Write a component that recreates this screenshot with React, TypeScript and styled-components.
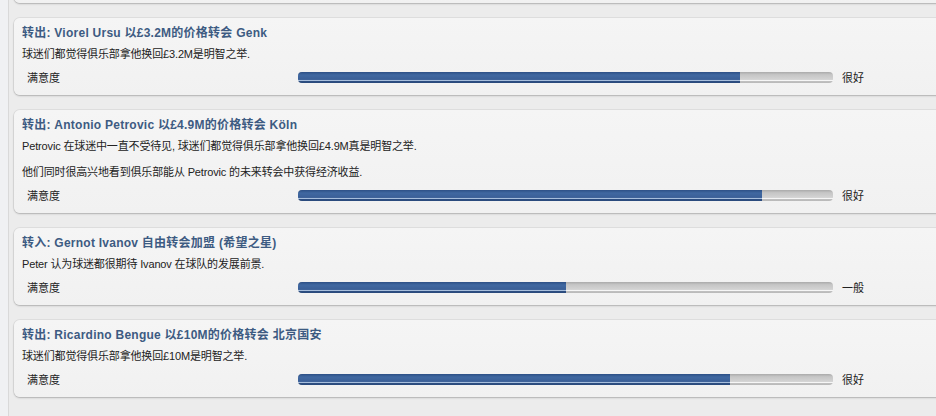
import React from 'react';
import styled, { createGlobalStyle } from 'styled-components';

const GlobalStyle = createGlobalStyle`
  html, body {
    margin: 0;
    padding: 0;
    background: #ececec;
    overflow: hidden;
  }
  body {
    font-family: "Liberation Sans", "Noto Sans CJK SC", sans-serif;
    color: #222;
  }
`;

const Page = styled.div`
  display: flex;
  width: 936px;
  height: 416px;
  overflow: hidden;
`;

const SideStrip = styled.div`
  width: 8px;
  flex-shrink: 0;
  background: #f0f1f3;
  border-right: 1px solid #d9d9d9;
`;

const List = styled.div`
  display: flex;
  flex-direction: column;
  gap: 15px;
  padding-left: 5px;
  width: 960px;
  flex-shrink: 0;
`;

const Card = styled.div<{ $offset?: number }>`
  background: linear-gradient(to bottom, #f5f5f5, #f1f1f1);
  border-radius: 6px;
  box-shadow: 0 1px 2px rgba(0, 0, 0, 0.22), 0 0 0 1px rgba(0, 0, 0, 0.05);
  padding: 7px 8px 10px 8px;
  margin-top: ${(p) => (p.$offset ? `${p.$offset}px` : '0')};
`;

const CardSpacer = styled.div`
  height: 60px;
`;

const Title = styled.div`
  font-weight: bold;
  font-size: 12px;
  line-height: 16px;
  letter-spacing: 0.25px;
  color: #3d5b82;
  white-space: nowrap;
`;

const Text = styled.p`
  margin: 5px 0 0;
  font-size: 11px;
  line-height: 16px;
  letter-spacing: -0.15px;
  white-space: nowrap;

  & + & {
    margin-top: 10px;
  }
`;

const Row = styled.div`
  display: grid;
  grid-template-columns: 271px 535px auto;
  align-items: center;
  margin-top: 7px;
  padding-left: 5px;
  height: 16px;
  font-size: 11px;
`;

const Track = styled.div`
  height: 11px;
  border-radius: 4px;
  overflow: hidden;
  background: linear-gradient(
    to bottom,
    #aaaaaa 0%,
    #c6c6c6 25%,
    #d3d3d3 68%,
    #f6f6f6 72%,
    #f6f6f6 82%,
    #bfbfbf 86%,
    #b8b8b8 100%
  );
`;

const Fill = styled.div`
  height: 100%;
  background: linear-gradient(
    to bottom,
    #2d5086 0%,
    #4068a1 28%,
    #3a5f97 68%,
    #a7bedc 72%,
    #a7bedc 82%,
    #2c4d80 86%,
    #2a4a7c 100%
  );
`;

const Rating = styled.span`
  padding-left: 9px;
  white-space: nowrap;
`;

type Transfer = {
  title: string;
  lines: string[];
  value: number;
  rating: string;
};

const transfers: Transfer[] = [
  {
    title: '转出: Viorel Ursu 以£3.2M的价格转会 Genk',
    lines: ['球迷们都觉得俱乐部拿他换回£3.2M是明智之举.'],
    value: 0.826,
    rating: '很好',
  },
  {
    title: '转出: Antonio Petrovic 以£4.9M的价格转会 Köln',
    lines: [
      'Petrovic 在球迷中一直不受待见, 球迷们都觉得俱乐部拿他换回£4.9M真是明智之举.',
      '他们同时很高兴地看到俱乐部能从 Petrovic 的未来转会中获得经济收益.',
    ],
    value: 0.867,
    rating: '很好',
  },
  {
    title: '转入: Gernot Ivanov 自由转会加盟 (希望之星)',
    lines: ['Peter 认为球迷都很期待 Ivanov 在球队的发展前景.'],
    value: 0.5,
    rating: '一般',
  },
  {
    title: '转出: Ricardino Bengue 以£10M的价格转会 北京国安',
    lines: ['球迷们都觉得俱乐部拿他换回£10M是明智之举.'],
    value: 0.807,
    rating: '很好',
  },
];

function Satisfaction({ value, rating }: { value: number; rating: string }) {
  return (
    <Row>
      <span>满意度</span>
      <Track>
        <Fill style={{ width: `${value * 100}%` }} />
      </Track>
      <Rating>{rating}</Rating>
    </Row>
  );
}

export default function App() {
  return (
    <>
      <GlobalStyle />
      <Page>
        <SideStrip />
        <List>
          {/* previous entry, scrolled out of view except its bottom edge */}
          <Card $offset={-74}>
            <CardSpacer />
          </Card>
          {transfers.map((t) => (
            <Card key={t.title}>
              <Title>{t.title}</Title>
              {t.lines.map((line) => (
                <Text key={line}>{line}</Text>
              ))}
              <Satisfaction value={t.value} rating={t.rating} />
            </Card>
          ))}
        </List>
      </Page>
    </>
  );
}
